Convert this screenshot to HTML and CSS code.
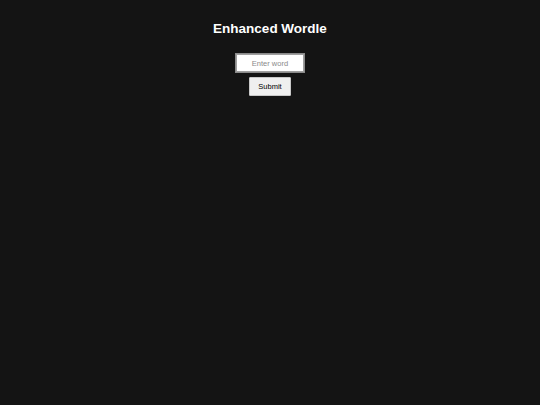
FILE: index.html
```html
<!DOCTYPE html>
<html lang="en">
<head>
<meta charset="utf-8">
<title>Enhanced Wordle</title>
<link rel="stylesheet" href="styles.css">
</head>
<body>
<main class="app">
  <h1 class="title">Enhanced Wordle</h1>
  <form class="entry" onsubmit="return false">
    <input class="word-input" type="text" placeholder="Enter word">
    <button class="submit-btn" type="submit">Submit</button>
  </form>
</main>
</body>
</html>
```

FILE: styles.css
```css
html, body {
  margin: 0;
  padding: 0;
  background: #141414;
  height: 100%;
}
body {
  font-family: "Liberation Sans", Arial, sans-serif;
}
.app {
  display: flex;
  flex-direction: column;
  align-items: center;
  padding-top: 21px;
}
.title {
  margin: 0 0 16px;
  font-size: 13.5px;
  line-height: 16px;
  font-weight: bold;
  color: #ffffff;
}
.entry {
  display: flex;
  flex-direction: column;
  align-items: center;
  gap: 4px;
}
.word-input {
  box-sizing: border-box;
  width: 70px;
  height: 20px;
  padding: 0 4px;
  border: 1px solid #8a8a8a;
  box-shadow: inset 0 0 0 1px rgba(80, 80, 80, 0.55);
  background: #ffffff;
  font-family: "Liberation Sans", Arial, sans-serif;
  font-size: 7.5px;
  text-align: center;
  color: #000;
}
.word-input::placeholder {
  color: #8a8a8a;
}
.submit-btn {
  box-sizing: border-box;
  width: 42px;
  height: 19px;
  padding: 0;
  border: 1px solid #c8c8c8;
  border-radius: 1px;
  background: #efefef;
  font-family: "Liberation Sans", Arial, sans-serif;
  font-size: 7.5px;
  color: #000;
}
```
